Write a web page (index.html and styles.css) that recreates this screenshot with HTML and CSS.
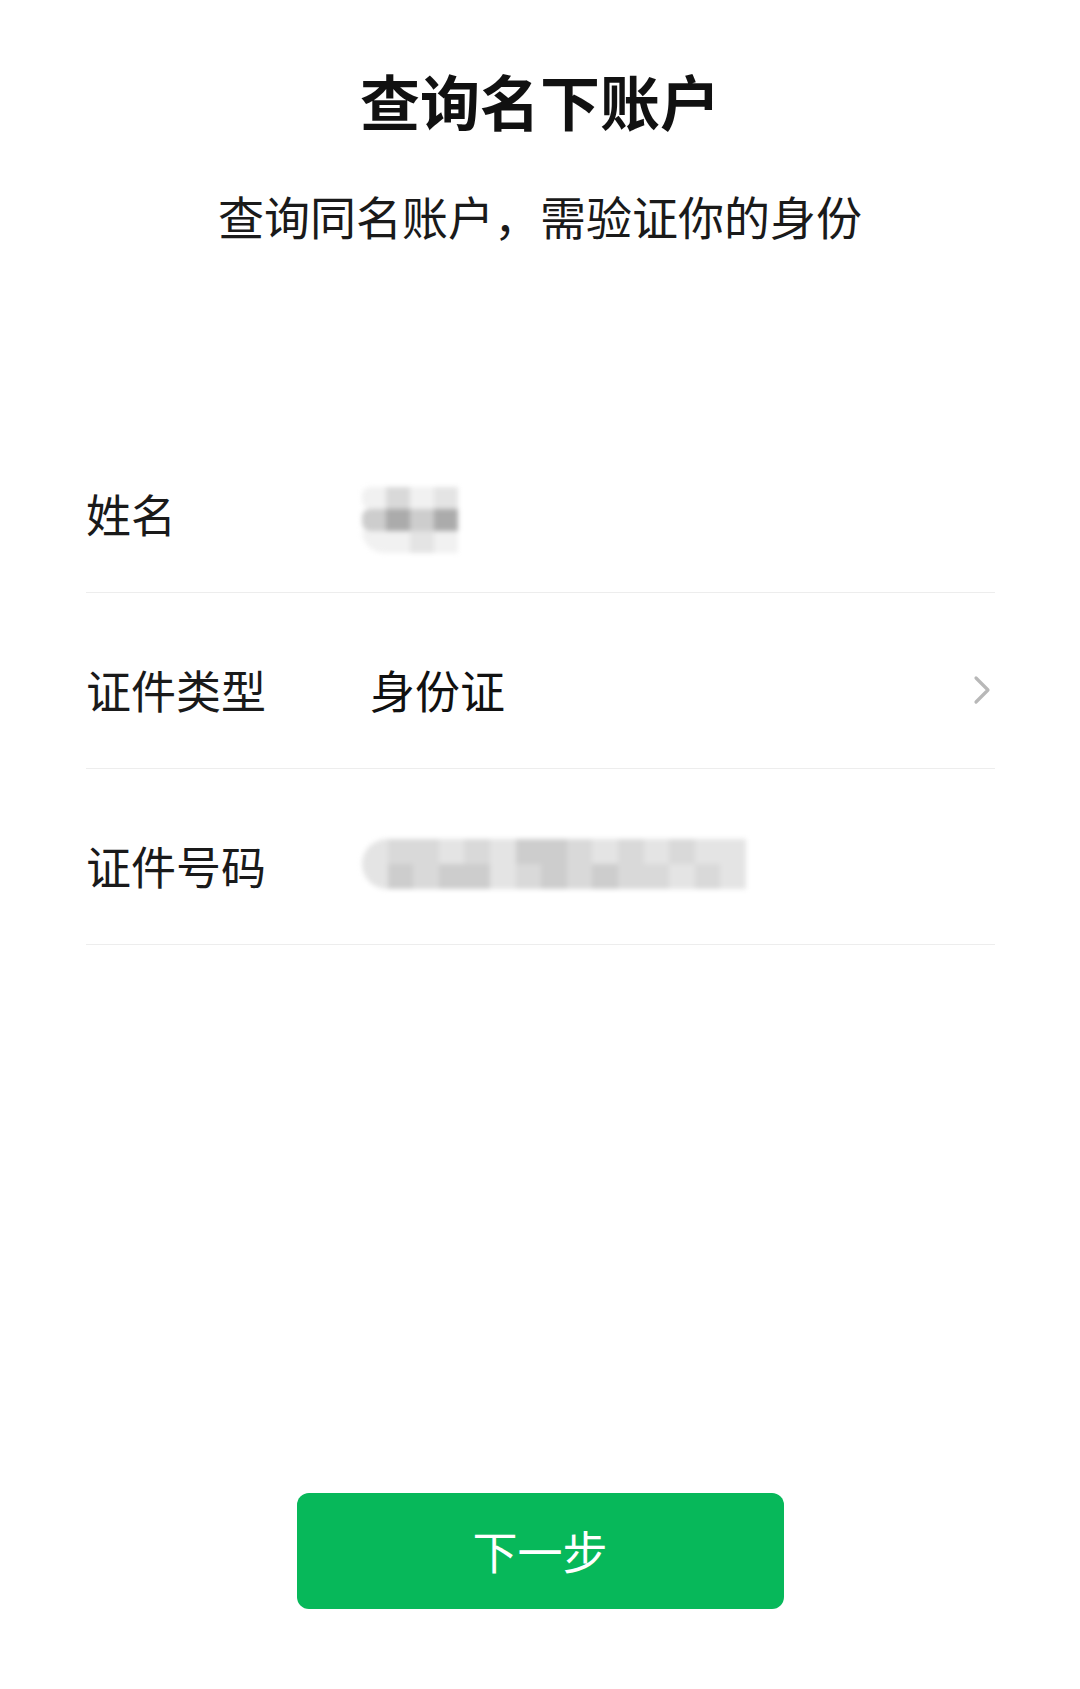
FILE: index.html
```html
<!DOCTYPE html>
<html lang="zh-CN">
<head>
<meta charset="utf-8">
<title>查询名下账户</title>
<link rel="stylesheet" href="styles.css">
</head>
<body>
<div class="page">
  <header class="header">
    <h1 class="title">查询名下账户</h1>
    <p class="subtitle">查询同名账户，需验证你的身份</p>
  </header>

  <section class="form">
    <div class="row">
      <div class="label">姓名</div>
      <div class="value">
        <div class="mosaic mosaic-name">
          <span class="g1 r-l"></span><span class="g3"></span><span class="g1"></span><span class="g2"></span>
          <span class="g4 r-l"></span><span class="g6"></span><span class="g4"></span><span class="g6"></span>
          <span class="g1 r-bl"></span><span class="g1"></span><span class="g2"></span><span class="g1"></span>
        </div>
      </div>
    </div>
    <div class="row">
      <div class="label">证件类型</div>
      <div class="value">身份证</div>
      <svg class="chevron" viewBox="0 0 18 30" width="18" height="30" aria-hidden="true">
        <path d="M3 3 L15 15 L3 27" fill="none" stroke="#b8b8b8" stroke-width="3.2" stroke-linecap="round" stroke-linejoin="round"/>
      </svg>
    </div>
    <div class="row">
      <div class="label">证件号码</div>
      <div class="value">
        <div class="mosaic mosaic-id">
          <span class="g2 r-tl"></span><span class="g3"></span><span class="g3"></span><span class="g2"></span><span class="g3"></span><span class="g2"></span><span class="g4"></span><span class="g4"></span><span class="g3"></span><span class="g2"></span><span class="g3"></span><span class="g2"></span><span class="g3"></span><span class="g2"></span><span class="g2"></span>
          <span class="g2 r-bl"></span><span class="g4"></span><span class="g3"></span><span class="g4"></span><span class="g4"></span><span class="g2"></span><span class="g3"></span><span class="g4"></span><span class="g3"></span><span class="g4"></span><span class="g3"></span><span class="g3"></span><span class="g2"></span><span class="g3"></span><span class="g2"></span>
        </div>
      </div>
    </div>
  </section>

  <div class="actions">
    <button class="btn-next" type="button">下一步</button>
  </div>
</div>
</body>
</html>
```

FILE: styles.css
```css
* {
  box-sizing: border-box;
}

html, body {
  margin: 0;
  padding: 0;
  background: #ffffff;
}

body {
  font-family: "Noto Sans CJK SC", "Noto Sans", sans-serif;
  color: #111111;
}

.page {
  width: 1080px;
  min-height: 1689px;
  display: flex;
  flex-direction: column;
  align-items: stretch;
}

.header {
  display: flex;
  flex-direction: column;
  align-items: center;
  padding-top: 60px;
}

.title {
  margin: 0;
  font-size: 60px;
  line-height: 80px;
  font-weight: 700;
  color: #111111;
}

.subtitle {
  margin: 45px 0 0;
  font-size: 46px;
  line-height: 60px;
  font-weight: 400;
  color: #1a1a1a;
}

.form {
  margin: 172px 85px 0 86px;
  display: flex;
  flex-direction: column;
}

.row {
  height: 176px;
  display: flex;
  align-items: center;
  padding-top: 18px;
  border-bottom: 1px solid #ededed;
}

.label {
  width: 284px;
  flex: none;
  font-size: 45px;
  line-height: 60px;
  color: #1a1a1a;
}

.value {
  flex: 1;
  font-size: 45px;
  line-height: 60px;
  color: #111111;
  display: flex;
  align-items: center;
}

.chevron {
  flex: none;
  display: block;
  margin-right: 4px;
}

.mosaic {
  display: grid;
  filter: blur(2.5px);
  margin-left: -8px;
}

.mosaic span {
  display: block;
}

.mosaic-name {
  grid-template-columns: repeat(4, 24px);
  grid-template-rows: repeat(3, 22px);
  margin-top: 12px;
}

.mosaic-id {
  grid-template-columns: repeat(15, 25.6px);
  grid-template-rows: repeat(2, 25px);
  margin-top: -4px;
}

.g1 { background: #f1f1f1; }
.g2 { background: #e4e4e4; }
.g3 { background: #d9d9d9; }
.g4 { background: #cdcdcd; }
.g5 { background: #bdbdbd; }
.g6 { background: #ababab; }

.r-l { border-radius: 8px 0 0 8px; }
.r-tl { border-radius: 25px 0 0 0; }
.r-bl { border-radius: 0 0 0 25px; }

.actions {
  display: flex;
  justify-content: center;
  margin-top: 548px;
}

.btn-next {
  width: 487px;
  height: 116px;
  border: none;
  border-radius: 12px;
  background: #07b85a;
  color: #ffffff;
  font-family: "Noto Sans CJK SC", "Noto Sans", sans-serif;
  font-size: 45px;
  font-weight: 400;
  line-height: 60px;
  padding: 0;
}
```
